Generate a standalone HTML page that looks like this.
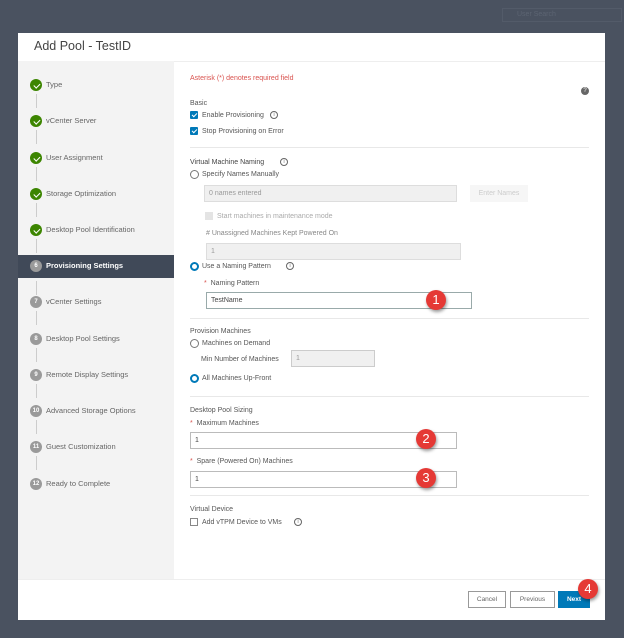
<!DOCTYPE html>
<html><head><meta charset="utf-8"><style>
*{margin:0;padding:0;box-sizing:border-box}
body{width:624px;height:638px;background:#4a5260;font-family:"Liberation Sans",sans-serif;position:relative;overflow:hidden;color:#565656}
.a{position:absolute;white-space:nowrap}
.t{font-size:7px;line-height:9px}
.modal{position:absolute;left:18px;top:33px;width:587px;height:587px;background:#fff}
.side{position:absolute;left:18px;top:61px;width:156px;height:518px;background:#f3f3f3}
.hr{position:absolute;left:190px;width:399px;height:1px;background:#e8e8e8}
.c{position:absolute;width:12px;height:12px;border-radius:50%;left:30px}
.g{background:#3c8500}
.g::after{content:"";position:absolute;left:4.5px;top:2.5px;width:2.5px;height:5px;border:solid #fff;border-width:0 1.2px 1.2px 0;transform:rotate(45deg)}
.gr{background:#9a9a9a;color:#fff;font-size:6px;text-align:center;line-height:12px;font-weight:bold}
.vl{position:absolute;left:35.5px;width:1px;height:14px;background:#ccc}
.sl{position:absolute;left:46px;font-size:7.5px;line-height:12px;color:#666;white-space:nowrap}
.cb{position:absolute;width:8px;height:8px;background:#0079b8;border-radius:1px}
.cb::after{content:"";position:absolute;left:2.5px;top:1px;width:2px;height:4px;border:solid #fff;border-width:0 1px 1px 0;transform:rotate(45deg)}
.rd{position:absolute;width:9px;height:9px;border-radius:50%;border:1px solid #777;background:#fff}
.rs{border:2.5px solid #0079b8}
.in{position:absolute;border:1px solid #bbb;background:#fff;font-size:7px;padding-left:4px;color:#444}
.dis{background:#f0f0f0;border-color:#ddd;color:#999}
.bd{position:absolute;width:20px;height:20px;border-radius:50%;background:#e53935;color:#fff;font-size:13px;text-align:center;line-height:20px;box-shadow:1px 2px 3px rgba(0,0,0,.4)}
.i{position:absolute;width:8px;height:8px;border:1px solid #666;border-radius:50%;font-size:5px;line-height:6px;text-align:center;color:#666}
.btn{position:absolute;height:17px;border:1px solid #999;background:#fff;font-size:6.5px;text-align:center;line-height:15px;color:#666}
.st{color:#d9534f}
</style></head><body>
<div class="a t" style="color:#5c6472;border:1px solid #535b69;width:120px;height:14px;left:502px;top:8px;padding-left:14px;line-height:12px">User Search</div>
<div class="modal"></div>
<div class="a" style="left:34px;top:39px;font-size:12.5px;color:#444">Add Pool - TestID</div>
<div style="position:absolute;left:18px;top:61px;width:587px;height:1px;background:#eee"></div>
<div class="side"></div>
<div style="position:absolute;left:18px;top:579px;width:587px;height:1px;background:#eee"></div>
<!-- sidebar -->
<div class="vl" style="top:94px"></div><div class="vl" style="top:130px"></div><div class="vl" style="top:167px"></div><div class="vl" style="top:203px"></div><div class="vl" style="top:239px"></div><div class="vl" style="top:281px"></div><div class="vl" style="top:311px"></div><div class="vl" style="top:348px"></div><div class="vl" style="top:384px"></div><div class="vl" style="top:420px"></div><div class="vl" style="top:456px"></div>
<div class="c g" style="top:79px"></div><div class="sl" style="top:79px">Type</div>
<div class="c g" style="top:115px"></div><div class="sl" style="top:115px">vCenter Server</div>
<div class="c g" style="top:152px"></div><div class="sl" style="top:152px">User Assignment</div>
<div class="c g" style="top:188px"></div><div class="sl" style="top:188px">Storage Optimization</div>
<div class="c g" style="top:224px"></div><div class="sl" style="top:224px">Desktop Pool Identification</div>
<div style="position:absolute;left:18px;top:255px;width:156px;height:23px;background:#404958"></div>
<div class="c gr" style="top:260px">6</div><div class="sl" style="top:260px;color:#fff;font-weight:bold">Provisioning Settings</div>
<div class="c gr" style="top:296px">7</div><div class="sl" style="top:296px">vCenter Settings</div>
<div class="c gr" style="top:333px">8</div><div class="sl" style="top:333px">Desktop Pool Settings</div>
<div class="c gr" style="top:369px">9</div><div class="sl" style="top:369px">Remote Display Settings</div>
<div class="c gr" style="top:405px">10</div><div class="sl" style="top:405px">Advanced Storage Options</div>
<div class="c gr" style="top:441px">11</div><div class="sl" style="top:441px">Guest Customization</div>
<div class="c gr" style="top:478px">12</div><div class="sl" style="top:478px">Ready to Complete</div>
<!-- content -->
<div class="a t st" style="left:190px;top:74px">Asterisk (*) denotes required field</div>
<div style="position:absolute;left:581px;top:87px;width:8px;height:8px;border-radius:50%;background:#666;color:#fff;font-size:6px;text-align:center;line-height:8px">?</div>
<div class="a t" style="left:190px;top:99px">Basic</div>
<div class="cb" style="left:190px;top:111px"></div><div class="a t" style="left:202px;top:111px">Enable Provisioning</div><div class="i" style="left:270px;top:111px">i</div>
<div class="cb" style="left:190px;top:127px"></div><div class="a t" style="left:202px;top:127px">Stop Provisioning on Error</div>
<div class="hr" style="top:147px"></div>
<div class="a t" style="left:190px;top:158px;color:#444">Virtual Machine Naming</div><div class="i" style="left:280px;top:158px">i</div>
<div class="rd" style="left:190px;top:170px"></div><div class="a t" style="left:202px;top:170px">Specify Names Manually</div>
<div class="in dis" style="left:204px;top:185px;width:253px;height:17px;line-height:15px">0 names entered</div>
<div class="a t" style="left:470px;top:185px;width:58px;height:17px;background:#f6f6f6;color:#ccc;text-align:center;line-height:17px">Enter Names</div>
<div style="position:absolute;left:205px;top:212px;width:8px;height:8px;background:#e4e4e4"></div><div class="a t" style="left:217px;top:212px;color:#aaa">Start machines in maintenance mode</div>
<div class="a t" style="left:206px;top:229px;color:#888"># Unassigned Machines Kept Powered On</div>
<div class="in dis" style="left:206px;top:243px;width:255px;height:17px;line-height:15px">1</div>
<div class="rd rs" style="left:190px;top:262px"></div><div class="a t" style="left:202px;top:262px">Use a Naming Pattern</div><div class="i" style="left:286px;top:262px">i</div>
<div class="a t" style="left:204px;top:279px"><span class="st">*</span>&nbsp; Naming Pattern</div>
<div class="in" style="left:206px;top:292px;width:266px;height:17px;line-height:15px;border-color:#9aa">TestName</div>
<div class="bd" style="left:426px;top:290px">1</div>
<div class="hr" style="top:318px"></div>
<div class="a t" style="left:190px;top:327px">Provision Machines</div>
<div class="rd" style="left:190px;top:339px"></div><div class="a t" style="left:202px;top:339px">Machines on Demand</div>
<div class="a t" style="left:201px;top:355px">Min Number of Machines</div>
<div class="in dis" style="left:291px;top:350px;width:84px;height:17px;line-height:15px;border-color:#ccc">1</div>
<div class="rd rs" style="left:190px;top:374px"></div><div class="a t" style="left:202px;top:374px">All Machines Up-Front</div>
<div class="hr" style="top:396px"></div>
<div class="a t" style="left:190px;top:406px">Desktop Pool Sizing</div>
<div class="a t" style="left:190px;top:419px"><span class="st">*</span>&nbsp; Maximum Machines</div>
<div class="in" style="left:190px;top:432px;width:267px;height:17px;line-height:15px">1</div>
<div class="bd" style="left:416px;top:429px">2</div>
<div class="a t" style="left:190px;top:457px"><span class="st">*</span>&nbsp; Spare (Powered On) Machines</div>
<div class="in" style="left:190px;top:471px;width:267px;height:17px;line-height:15px">1</div>
<div class="bd" style="left:416px;top:468px">3</div>
<div class="hr" style="top:495px"></div>
<div class="a t" style="left:190px;top:505px">Virtual Device</div>
<div style="position:absolute;left:190px;top:518px;width:8px;height:8px;border:1px solid #888;background:#fff"></div><div class="a t" style="left:202px;top:518px">Add vTPM Device to VMs</div><div class="i" style="left:294px;top:518px">i</div>
<!-- footer -->
<div class="btn" style="left:468px;top:591px;width:38px">Cancel</div>
<div class="btn" style="left:510px;top:591px;width:45px">Previous</div>
<div class="btn" style="left:558px;top:591px;width:32px;background:#0079b8;border-color:#0079b8;color:#fff;font-weight:bold">Next</div>
<div class="bd" style="left:578px;top:579px">4</div>
</body></html>
